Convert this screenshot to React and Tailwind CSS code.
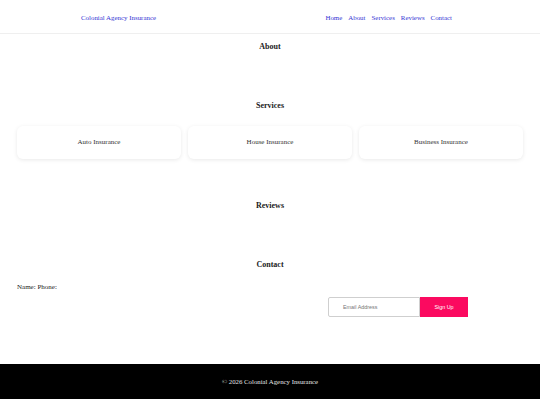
export default function App() {
  const serif = { fontFamily: '"Liberation Serif", "Times New Roman", serif' };
  return (
    <div className="w-[540px] bg-white text-[#222]" style={serif}>
      <header className="h-[34px] border-b border-[#efefef] flex items-center justify-between pt-[3px] pl-[81px] pr-[88px]">
        <div className="text-[6.9px] text-[#3535d4]">Colonial Agency Insurance</div>
        <nav className="flex gap-[6px] text-[6.9px] text-[#3535d4]">
          <span>Home</span>
          <span>About</span>
          <span>Services</span>
          <span>Reviews</span>
          <span>Contact</span>
        </nav>
      </header>

      <section className="pt-[8px]">
        <h2 className="text-center font-bold text-[8px] leading-[10px]">About</h2>
      </section>

      <section className="pt-[49px]">
        <h2 className="text-center font-bold text-[8px] leading-[10px]">Services</h2>
        <div className="mt-[15px] px-[17px] grid grid-cols-3 gap-[7px]">
          {["Auto Insurance", "House Insurance", "Business Insurance"].map((t) => (
            <div
              key={t}
              className="h-[33px] rounded-[6px] bg-white flex items-center justify-center text-[7px] text-[#333] shadow-[0_1px_4px_rgba(0,0,0,0.09)]"
            >
              {t}
            </div>
          ))}
        </div>
      </section>

      <section className="pt-[42px]">
        <h2 className="text-center font-bold text-[8px] leading-[10px]">Reviews</h2>
      </section>

      <section className="pt-[49px]">
        <h2 className="text-center font-bold text-[8px] leading-[10px]">Contact</h2>
        <div className="mt-[12px] pl-[17px] text-[7px] leading-[10px] text-[#222]">Name: Phone:</div>
        <div className="mt-[5px] flex pl-[328px]">
          <div
            className="w-[92px] h-[20px] border border-[#cfcfcf] rounded-l-[2px] flex items-center pl-[14px] text-[5.4px] text-[#777]"
            style={{ fontFamily: '"Liberation Sans", Arial, sans-serif' }}
          >
            Email Address
          </div>
          <div
            className="w-[48px] h-[20px] bg-[#fb0a60] flex items-center justify-center text-[5.4px] text-white"
            style={{ fontFamily: '"Liberation Sans", Arial, sans-serif' }}
          >
            Sign Up
          </div>
        </div>
      </section>

      <footer className="mt-[47px] h-[35px] bg-black flex items-center justify-center pt-[2px] text-[6.8px] text-[#e5e5e5]">
        © 2026 Colonial Agency Insurance
      </footer>
    </div>
  );
}
